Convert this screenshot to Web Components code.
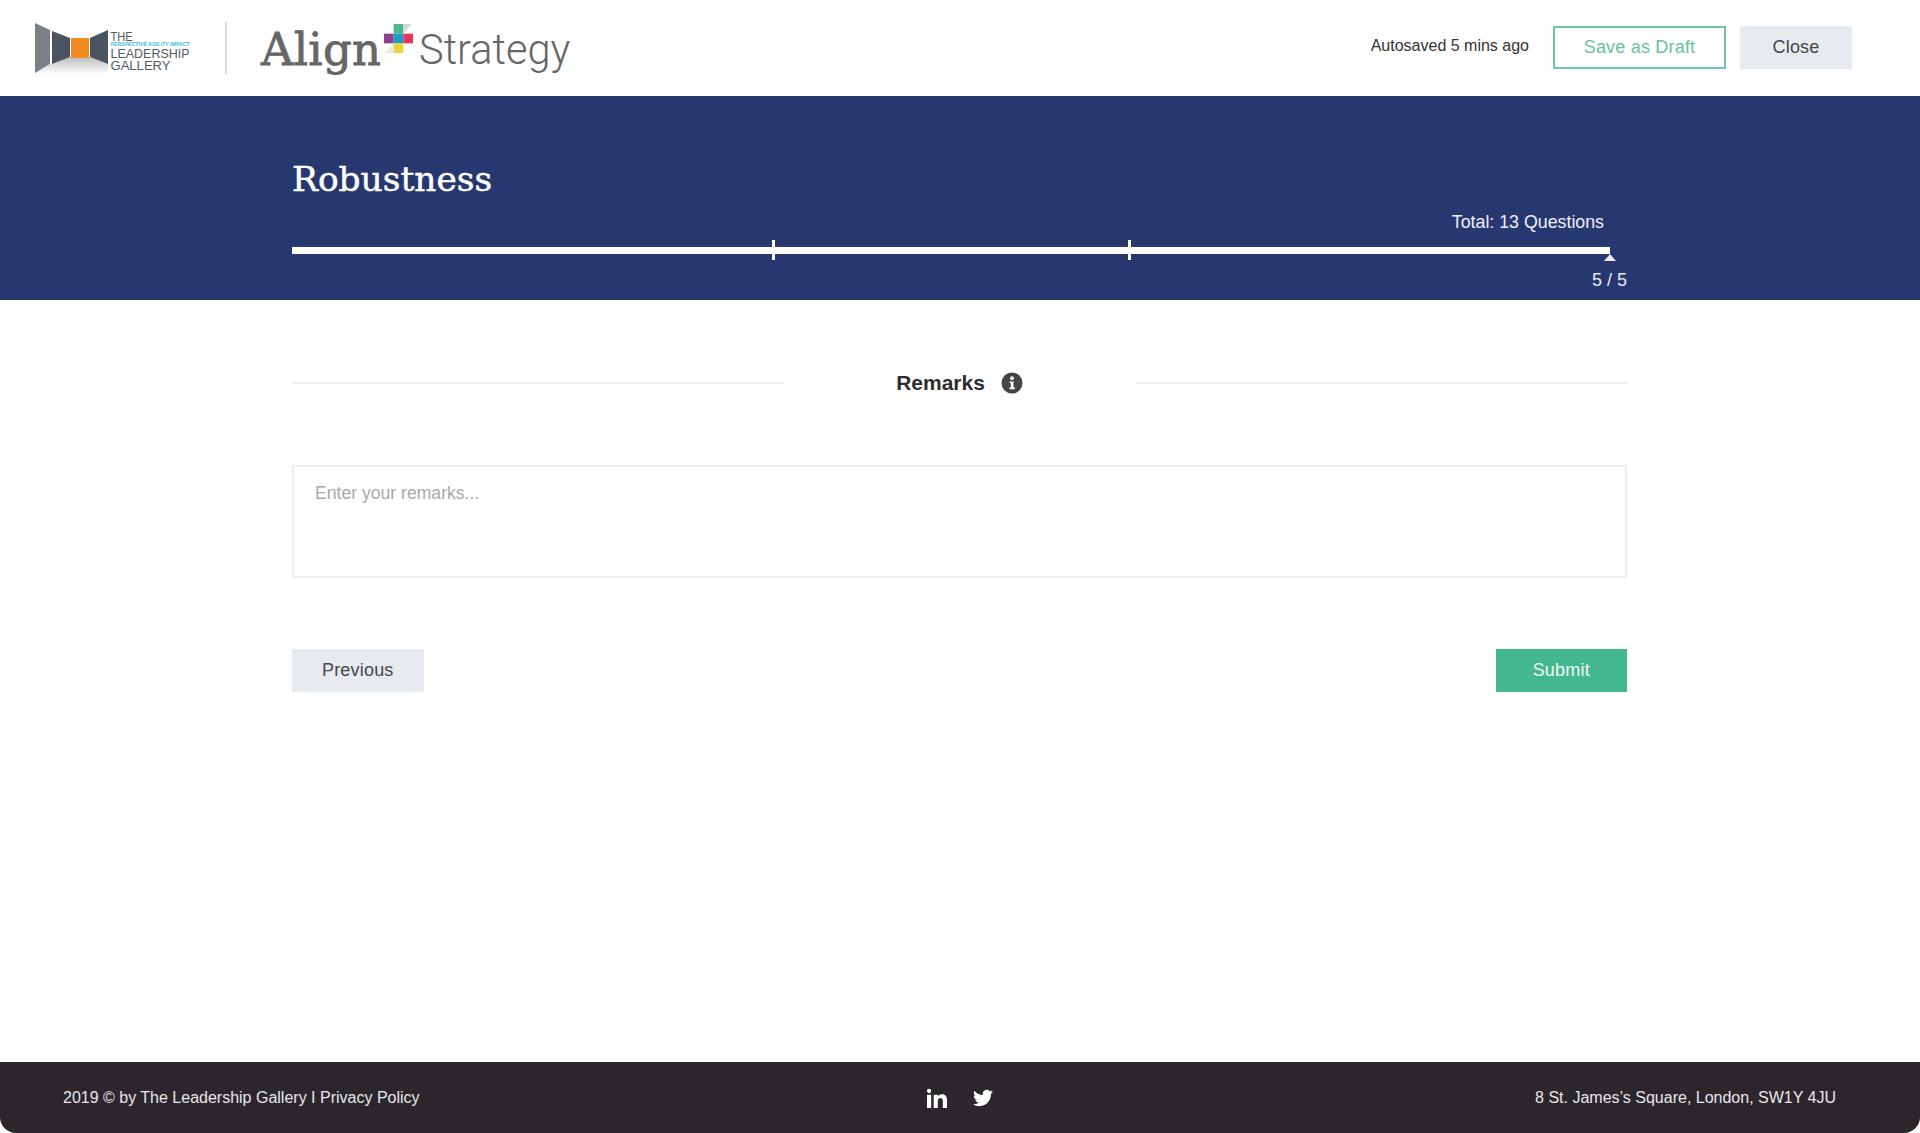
<!DOCTYPE html>
<html lang="en">
<head>
<meta charset="utf-8">
<title>Robustness</title>
<style>
  html, body { margin: 0; padding: 0; height: 100%; background: #fff; }
  body { font-family: "Liberation Sans", Arial, sans-serif; }
</style>
</head>
<body>
<assessment-page>
  <top-bar slot="top"></top-bar>
  <section-banner slot="top" heading="Robustness" total="Total: 13 Questions" step="5 / 5"></section-banner>
  <remarks-form></remarks-form>
  <site-footer slot="bottom"></site-footer>
</assessment-page>

<script>
class AssessmentPage extends HTMLElement {
    connectedCallback() {
        this.attachShadow({ mode: 'open' });
        this.shadowRoot.innerHTML = `
            <style>
                :host { display: flex; flex-direction: column; height: 1133px; overflow: hidden; }
                main { flex: 1; }
            </style>
            <slot name="top"></slot>
            <main><slot></slot></main>
            <slot name="bottom"></slot>
        `;
    }
}

class UiButton extends HTMLElement {
    connectedCallback() {
        this.attachShadow({ mode: 'open' });
        this.shadowRoot.innerHTML = `
            <style>
                :host {
                    display: inline-flex;
                    align-items: center;
                    justify-content: center;
                    box-sizing: border-box;
                    height: 43px;
                    font-size: 18px;
                    letter-spacing: 0.2px;
                    cursor: pointer;
                    background: #e7eaee;
                    color: #43464c;
                }
                :host([variant="outline"]) {
                    background: #fff;
                    color: #68c2a3;
                    border: 2px solid #6cc6a8;
                }
                :host([variant="primary"]) {
                    background: #43b78f;
                    color: #f2fbf8;
                }
            </style>
            <slot></slot>
        `;
    }
}

class TopBar extends HTMLElement {
    connectedCallback() {
        this.attachShadow({ mode: 'open' });
        this.shadowRoot.innerHTML = `
            <style>
                :host {
                    display: flex;
                    align-items: center;
                    height: 96px;
                    box-sizing: border-box;
                    padding: 0 68px 0 35px;
                    background: #fff;
                }
                .divider { width: 2px; height: 52px; background: #dcdcdc; margin: 0 34px 0 15px; }
                .align {
                    font-family: "DejaVu Serif", serif;
                    font-size: 45px;
                    letter-spacing: 0.2px;
                    color: #666;
                    line-height: 1;
                    -webkit-text-stroke: 0.8px #666;
                }
                .strategy {
                    font-family: Roboto, "Liberation Sans", sans-serif;
                    font-weight: 300;
                    font-size: 41.6px;
                    color: #666;
                    line-height: 1;
                    margin-left: 6px;
                }
                .plus { margin: -22px 0 0 3px; flex: none; }
                .brand { display: flex; align-items: center; margin-top: 3px; }
                .actions { margin: -2px 0 0 auto; display: flex; align-items: center; }
                .saved { font-size: 16px; color: #333; margin: -3px 24px 0 0; }
                .draft { width: 173px; height: 43px; }
                .close { width: 112px; margin-left: 14px; }
            </style>
            <svg width="175" height="52" viewBox="35 22 175 52" style="flex:none">
                <defs>
                    <linearGradient id="floor" x1="0" y1="0" x2="0" y2="1">
                        <stop offset="0" stop-color="#b9bcbf"/>
                        <stop offset="1" stop-color="#fff"/>
                    </linearGradient>
                </defs>
                <polygon points="50,64 70,57 90,57 108,64 108,74 35,74" fill="url(#floor)"/>
                <polygon points="35,23 50,30 50,64 35,73" fill="#7b8187"/>
                <polygon points="52,31 70,38 70,57 52,64" fill="#4a5360"/>
                <rect x="71" y="38" width="18" height="20" fill="#f48b20"/>
                <polygon points="90,38 108,30 108,64 90,57" fill="#4a5360"/>
                <g font-family="Liberation Sans, sans-serif" fill="#555a60">
                    <text x="110.5" y="40.5" font-size="13" textLength="22" lengthAdjust="spacingAndGlyphs">THE</text>
                    <text x="110.5" y="46" font-size="4.6" font-style="italic" font-weight="bold" fill="#35c3d2" textLength="79" lengthAdjust="spacingAndGlyphs">PERSPECTIVE AGILITY IMPACT</text>
                    <text x="110.5" y="58" font-size="13" textLength="79" lengthAdjust="spacingAndGlyphs">LEADERSHIP</text>
                    <text x="110.5" y="70" font-size="13" textLength="60" lengthAdjust="spacingAndGlyphs">GALLERY</text>
                </g>
            </svg>
            <div class="divider"></div>
            <div class="brand">
                <span class="align">Align</span>
                <svg class="plus" width="29" height="29" viewBox="0 0 27 27">
                    <rect x="9" y="0" width="9" height="9" fill="#4cb88a"/>
                    <polygon points="18,0 26,0 18,9" fill="#d3d7d9"/>
                    <rect x="0" y="9" width="9" height="9" fill="#8b3f8c"/>
                    <rect x="9" y="9" width="9" height="9" fill="#1d9fc4"/>
                    <rect x="18" y="9" width="9" height="9" fill="#e8365d"/>
                    <rect x="9" y="18" width="9" height="9" fill="#ecd33a"/>
                    <polygon points="9,18 9,27 1,27" fill="#ece8d8"/>
                </svg>
                <span class="strategy">Strategy</span>
            </div>
            <div class="actions">
                <span class="saved">Autosaved 5 mins ago</span>
                <ui-button class="draft" variant="outline">Save as Draft</ui-button>
                <ui-button class="close">Close</ui-button>
            </div>
        `;
    }
}

class ProgressTrack extends HTMLElement {
    connectedCallback() {
        this.attachShadow({ mode: 'open' });
        this.shadowRoot.innerHTML = `
            <style>
                :host { display: block; position: relative; height: 7px; background: #fff; width: 1318px; }
                .tick { position: absolute; top: -7px; width: 3px; height: 20px; background: #fff; }
                .tip {
                    position: absolute; right: -6px; top: 7px; width: 0; height: 0;
                    border-left: 6px solid transparent;
                    border-right: 6px solid transparent;
                    border-bottom: 7px solid #e8ebf2;
                }
            </style>
            <span class="tick" style="left:480px"></span>
            <span class="tick" style="left:836px"></span>
            <span class="tip"></span>
        `;
    }
}

class SectionBanner extends HTMLElement {
    connectedCallback() {
        this.attachShadow({ mode: 'open' });
        this.shadowRoot.innerHTML = `
            <style>
                :host {
                    display: block;
                    height: 204px;
                    box-sizing: border-box;
                    padding: 63px 293px 0 292px;
                    background: #27376f;
                    color: #fff;
                }
                h1 {
                    margin: 0;
                    font-family: "DejaVu Serif", serif;
                    font-weight: 400;
                    font-size: 34.4px;
                    line-height: 40px;
                    -webkit-text-stroke: 0.5px #fff;
                }
                .total { font-size: 17.8px; line-height: 20px; margin: 13px 23px 15px 0; text-align: right; color: #eef1f8; }
                .step { font-size: 18px; line-height: 20px; text-align: right; margin-top: 16px; color: #e8ebf2; }
            </style>
            <h1>${this.getAttribute('heading')}</h1>
            <div class="total">${this.getAttribute('total')}</div>
            <progress-track></progress-track>
            <div class="step">${this.getAttribute('step')}</div>
        `;
    }
}

class RemarksForm extends HTMLElement {
    connectedCallback() {
        this.attachShadow({ mode: 'open' });
        this.shadowRoot.innerHTML = `
            <style>
                :host { display: block; padding: 69px 293px 0 292px; }
                .title {
                    display: grid;
                    grid-template-columns: 492px 1fr 492px;
                    align-items: center;
                    height: 28px;
                }
                .rule { height: 2px; background: #eeeeee; margin-top: -1px; }
                .rule.end { margin-left: 1px; margin-right: -1px; }
                .label {
                    display: flex; align-items: center; justify-content: center; gap: 16px;
                    font-size: 21px; font-weight: 700; color: #2e2e2e;
                }
                .box {
                    box-sizing: border-box;
                    height: 113px;
                    margin-top: 68px;
                    padding: 16px 21px;
                    border: 2px solid #eeeeee;
                    font-size: 17.6px;
                    line-height: 20px;
                    color: #a9a9a9;
                }
                .nav { display: flex; justify-content: space-between; margin-top: 71px; }
                ui-button { width: 131.5px; }
            </style>
            <div class="title">
                <div class="rule"></div>
                <div class="label">Remarks
                    <svg width="22" height="22" viewBox="0 0 22 22">
                        <circle cx="11" cy="11" r="10.5" fill="#454545"/>
                        <circle cx="11" cy="6.2" r="1.9" fill="#fff"/>
                        <path d="M8.6 9.4h3.9v6.2h1.4v1.7H8.5v-1.7h1.3v-4.5H8.6z" fill="#fff"/>
                    </svg>
                </div>
                <div class="rule end"></div>
            </div>
            <div class="box">Enter your remarks...</div>
            <div class="nav">
                <ui-button>Previous</ui-button>
                <ui-button variant="primary">Submit</ui-button>
            </div>
        `;
    }
}

class SiteFooter extends HTMLElement {
    connectedCallback() {
        this.attachShadow({ mode: 'open' });
        this.shadowRoot.innerHTML = `
            <style>
                :host {
                    display: grid;
                    grid-template-columns: 1fr auto 1fr;
                    align-items: center;
                    height: 71px;
                    box-sizing: border-box;
                    padding: 0 84px 0 63px;
                    background: #2a262c;
                    color: #e9e7ea;
                    font-size: 16px;
                    border-radius: 0 0 16px 16px;
                }
                .social { display: flex; gap: 26px; align-items: center; margin-left: 21px; }
                .social svg { display: block; fill: #fff; }
                .right { text-align: right; }
            </style>
            <div>2019 © by The Leadership Gallery I Privacy Policy</div>
            <div class="social">
                <svg width="20" height="20" viewBox="0 0 24 24"><path d="M4.98 3.5c0 1.381-1.11 2.5-2.48 2.5s-2.48-1.119-2.48-2.5c0-1.38 1.11-2.5 2.48-2.5s2.48 1.12 2.48 2.5zm.02 4.5h-5v16h5v-16zm7.982 0h-4.968v16h4.969v-8.399c0-4.67 6.029-5.052 6.029 0v8.399h4.988v-10.131c0-7.88-8.922-7.593-11.018-3.714v-2.155z"/></svg>
                <svg width="20" height="20" viewBox="0 0 24 24"><path d="M23.953 4.57a10 10 0 01-2.825.775 4.958 4.958 0 002.163-2.723c-.951.555-2.005.959-3.127 1.184a4.92 4.92 0 00-8.384 4.482C7.69 8.095 4.067 6.13 1.64 3.162a4.822 4.822 0 00-.666 2.475c0 1.71.87 3.213 2.188 4.096a4.904 4.904 0 01-2.228-.616v.06a4.923 4.923 0 003.946 4.827 4.996 4.996 0 01-2.212.085 4.936 4.936 0 004.604 3.417 9.867 9.867 0 01-6.102 2.105c-.39 0-.779-.023-1.17-.067a13.995 13.995 0 007.557 2.209c9.053 0 13.998-7.496 13.998-13.985 0-.21 0-.42-.015-.63A9.935 9.935 0 0024 4.59z"/></svg>
            </div>
            <div class="right">8 St. James’s Square, London, SW1Y 4JU</div>
        `;
    }
}

customElements.define('ui-button', UiButton);
customElements.define('assessment-page', AssessmentPage);
customElements.define('top-bar', TopBar);
customElements.define('progress-track', ProgressTrack);
customElements.define('section-banner', SectionBanner);
customElements.define('remarks-form', RemarksForm);
customElements.define('site-footer', SiteFooter);
</script>
</body>
</html>
